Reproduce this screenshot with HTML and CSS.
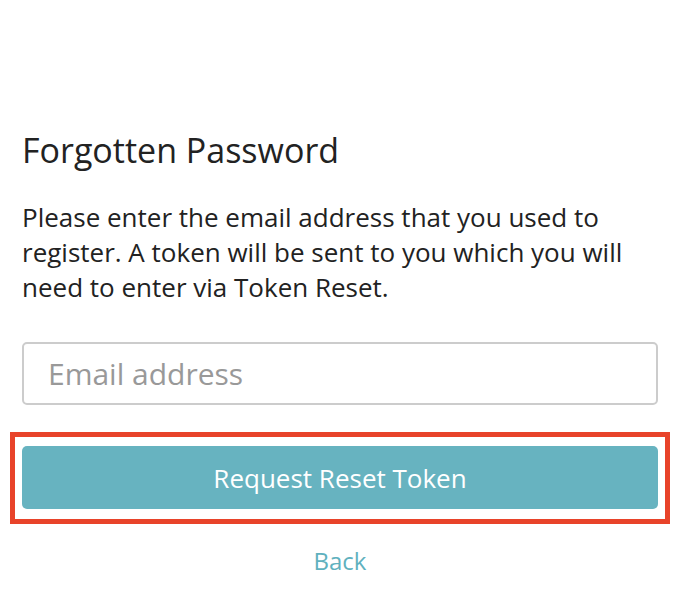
FILE: index.html
```html
<!DOCTYPE html>
<html lang="en">
  <head>
    <meta charset="UTF-8" />
    <title>Forgotten Password</title>
    <link rel="stylesheet" href="styles.css">
  </head>
  <body>
    <div class="container">
      <h1>Forgotten Password</h1>
      <p class="intro">
        Please enter the email address that you used to register. A token
        will be sent to you which you will need to enter via Token Reset.
      </p>
      <form class="reset-form" onsubmit="return false;">
        <input type="email" class="email-input" placeholder="Email address" />
        <div class="highlight">
          <button type="submit" class="submit-btn">Request Reset Token</button>
        </div>
      </form>
      <div class="back">
        <a href="#">Back</a>
      </div>
    </div>
  </body>
</html>
```

FILE: styles.css
```css
body {
  margin: 0;
  padding: 0;
  font-family: "Open Sans", "Noto Sans", sans-serif;
  background: #ffffff;
  color: #222;
}
.container {
  padding: 130px 24px 0 22px;
}
h1 {
  margin: 0;
  font-size: 34px;
  font-weight: 400;
  line-height: 40px;
  color: #222;
}
.intro {
  margin: 30px 0 0;
  font-size: 26px;
  line-height: 35px;
  color: #222;
}
.reset-form {
  margin-top: 37px;
}
.email-input {
  box-sizing: border-box;
  display: block;
  width: 100%;
  height: 63px;
  padding: 0 24px;
  border: 2px solid #cccccc;
  border-radius: 5px;
  font-family: inherit;
  font-size: 30px;
  color: #333;
}
.email-input::placeholder {
  color: #999;
}
.highlight {
  margin: 27px -12px 0 -12px;
  padding: 9px 7px 10px 7px;
  border: 5px solid #e8432a;
}
.submit-btn {
  display: block;
  width: 100%;
  height: 63px;
  border: none;
  border-radius: 5px;
  background-color: #67b3c0;
  color: white;
  font-family: inherit;
  font-size: 26px;
  cursor: pointer;
}
.back {
  margin-top: 20px;
  text-align: center;
  font-size: 24px;
}
.back a {
  color: #5fb1be;
  text-decoration: none;
}
```
